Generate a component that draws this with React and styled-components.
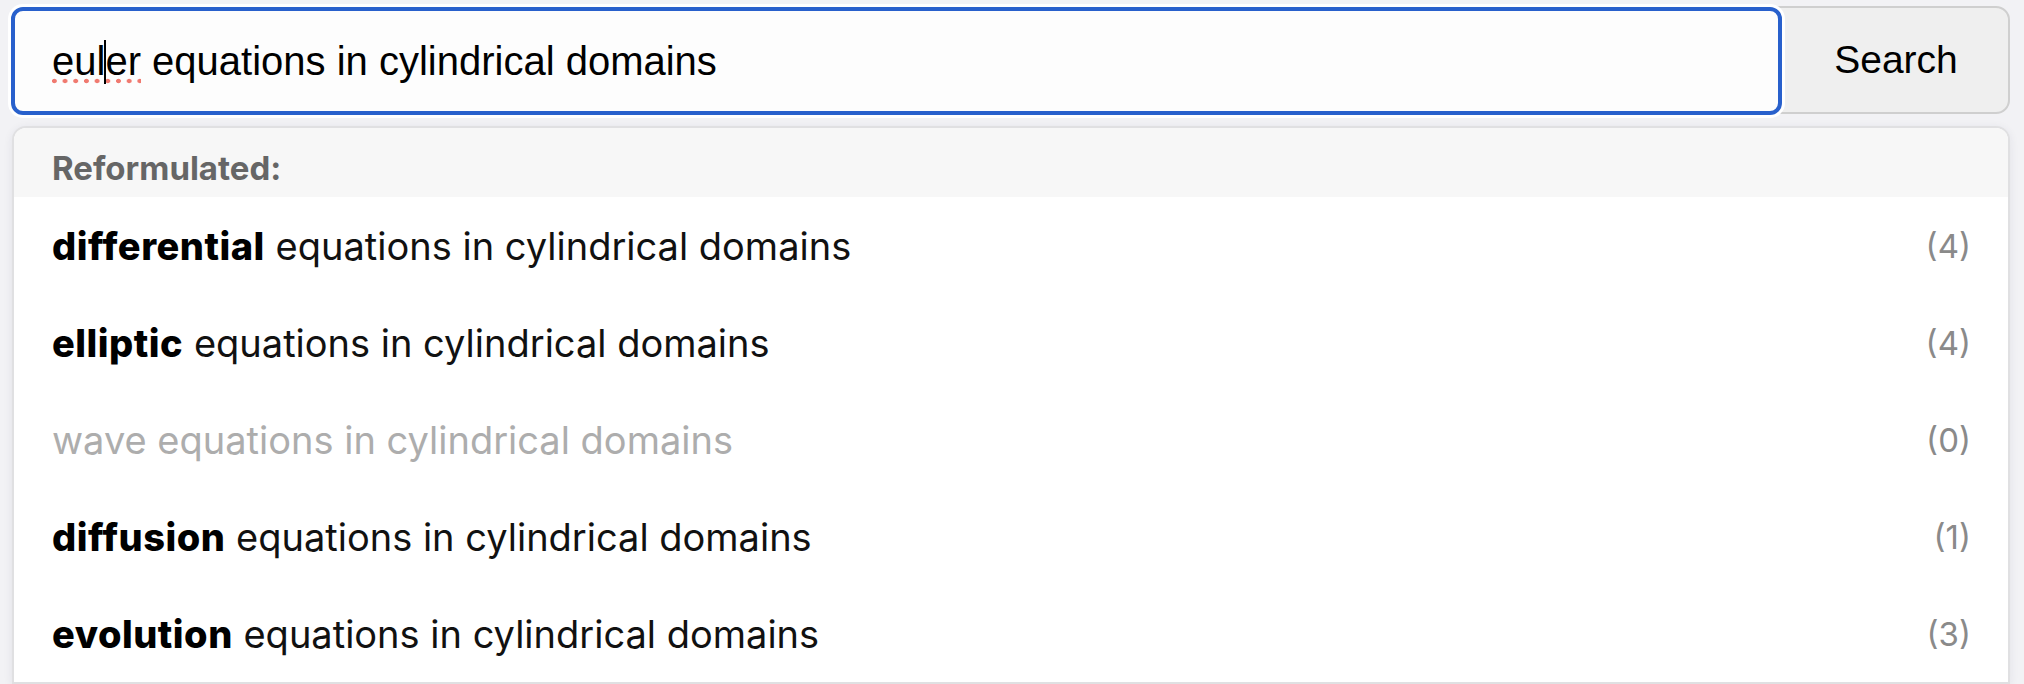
import React from "react";
import styled, { createGlobalStyle } from "styled-components";

const GlobalStyle = createGlobalStyle`
  html, body {
    margin: 0;
    padding: 0;
    background: #f2f2f5;
  }
  body {
    font-family: "Liberation Sans", Arial, sans-serif;
    color: #111;
  }
`;

const Page = styled.div`
  padding: 7px 14px 0 11px;
`;

const SearchForm = styled.form`
  display: flex;
  align-items: stretch;
  height: 108px;
  margin: 0;
`;

const QueryField = styled.div`
  flex: 1;
  position: relative;
  z-index: 1;
  display: flex;
  align-items: center;
  box-sizing: border-box;
  padding: 0 37px;
  border: 4px solid #2860cc;
  border-radius: 12px;
  background: #fdfdfd;
  box-shadow: 0 0 0 3px #ffffff;
  font-family: "Liberation Sans", Arial, sans-serif;
  font-size: 40px;
  color: #000;
  white-space: pre;
`;

const Misspelled = styled.span`
  background-image: radial-gradient(circle, #f07a70 2.1px, transparent 2.6px);
  background-size: 10.7px 6px;
  background-repeat: repeat-x;
  background-position: -3px 100%;
`;

const Caret = styled.span`
  display: inline-block;
  width: 2px;
  height: 44px;
  margin: 0 -1px;
  vertical-align: -9px;
  background: #000;
`;

const SearchButton = styled.button`
  width: 242px;
  margin: -1px 0 1px -14px;
  padding: 0 0 0 14px;
  box-sizing: border-box;
  border: 2px solid #cfcfcf;
  border-radius: 0 14px 14px 0;
  background: #efefef;
  font-family: "Liberation Sans", Arial, sans-serif;
  font-size: 39px;
  color: #000;
  cursor: pointer;
`;

const Suggestions = styled.div`
  margin: 11px 0 0 1px;
  border: 2px solid #e0e0e2;
  border-radius: 14px 14px 0 0;
  overflow: hidden;
  background: #fff;
  box-shadow: 0 2px 10px rgba(40, 40, 80, 0.08);
  font-family: Inter, "Liberation Sans", sans-serif;
`;

const SuggestionHeader = styled.div`
  height: 69px;
  box-sizing: border-box;
  padding: 20px 38px 0;
  background: #f7f7f7;
  font-size: 33px;
  font-weight: 700;
  line-height: 40px;
  color: #666;
`;

const SuggestionList = styled.ul`
  list-style: none;
  margin: 0;
  padding: 0;
`;

const SuggestionRow = styled.li`
  display: flex;
  align-items: center;
  justify-content: space-between;
  height: 97px;
  padding: 0 37px 0 38px;
  font-size: 38px;
  color: ${(p) => (p.$disabled ? "#adadad" : "#111")};
`;

const Term = styled.b`
  font-weight: ${(p) => (p.$disabled ? 400 : 800)};
  letter-spacing: ${(p) => (p.$disabled ? "0" : "0.5px")};
  color: ${(p) => (p.$disabled ? "#adadad" : "#000")};
`;

const Count = styled.span`
  font-size: 33px;
  color: #8a8a8a;
`;

const rows = [
  { term: "differential", count: 4 },
  { term: "elliptic", count: 4 },
  { term: "wave", count: 0 },
  { term: "diffusion", count: 1 },
  { term: "evolution", count: 3 },
];

export default function App() {
  return (
    <>
      <GlobalStyle />
      <Page>
        <SearchForm onSubmit={(e) => e.preventDefault()}>
          <QueryField role="textbox" aria-label="Search query">
            <Misspelled>
              eul
              <Caret />
              er
            </Misspelled>
            {" equations in cylindrical domains"}
          </QueryField>
          <SearchButton type="submit">Search</SearchButton>
        </SearchForm>
        <Suggestions>
          <SuggestionHeader>Reformulated:</SuggestionHeader>
          <SuggestionList>
            {rows.map((r) => {
              const disabled = r.count === 0;
              return (
                <SuggestionRow key={r.term} $disabled={disabled}>
                  <span>
                    <Term $disabled={disabled}>{r.term}</Term> equations in cylindrical domains
                  </span>
                  <Count>({r.count})</Count>
                </SuggestionRow>
              );
            })}
          </SuggestionList>
        </Suggestions>
      </Page>
    </>
  );
}
